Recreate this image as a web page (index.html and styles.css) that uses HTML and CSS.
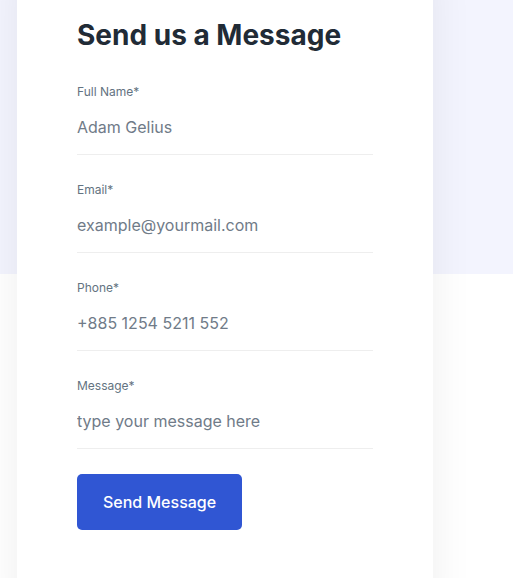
FILE: index.html
```html
<!DOCTYPE html>
<html lang="en">
<head>
<meta charset="utf-8">
<title>Contact</title>
<link rel="stylesheet" href="styles.css">
</head>
<body>
<section class="contact">
  <div class="card">
    <h3 class="title">Send us a Message</h3>
    <form class="form">
      <div class="group">
        <label class="label" for="name">Full Name*</label>
        <input class="field" id="name" type="text" placeholder="Adam Gelius">
      </div>
      <div class="group">
        <label class="label" for="email">Email*</label>
        <input class="field" id="email" type="email" placeholder="example@yourmail.com">
      </div>
      <div class="group">
        <label class="label" for="phone">Phone*</label>
        <input class="field" id="phone" type="text" placeholder="+885 1254 5211 552">
      </div>
      <div class="group group-last">
        <label class="label" for="msg">Message*</label>
        <input class="field" id="msg" type="text" placeholder="type your message here">
      </div>
      <button class="btn" type="button">Send Message</button>
    </form>
  </div>
</section>
</body>
</html>
```
FILE: styles.css
```css
* { box-sizing: border-box; }
html, body { margin: 0; padding: 0; }
body {
  font-family: Inter, "Noto Sans", sans-serif;
  background: linear-gradient(#f3f4fe 0, #f3f4fe 274px, #ffffff 274px);
  height: 578px;
  overflow: hidden;
}
.contact {
  padding-left: 17px;
}
.card {
  width: 416px;
  margin-top: -40px;
  padding: 55px 60px 80px;
  background: #fff;
  box-shadow: 0 10px 40px rgba(0, 0, 0, 0.07);
}
.title {
  margin: 0 0 28px;
  font-size: 28px;
  line-height: 40px;
  font-weight: 700;
  color: #212b36;
}
.form { display: flex; flex-direction: column; align-items: flex-start; }
.group { width: 100%; margin-bottom: 26px; }
.group-last { margin-bottom: 25px; }
.label {
  display: block;
  font-size: 12px;
  line-height: 18px;
  color: #637381;
}
.field {
  display: block;
  width: 100%;
  border: 0;
  border-bottom: 1px solid #eeeeee;
  padding: 14px 0 15px;
  font-family: inherit;
  font-size: 16px;
  line-height: 24px;
  color: #637381;
  background: transparent;
  outline: none;
}
.field::placeholder { color: #707b88; opacity: 1; }
.btn {
  border: 0;
  border-radius: 5px;
  background: #3056d3;
  color: #fff;
  font-family: inherit;
  font-size: 16px;
  font-weight: 500;
  line-height: 24px;
  padding: 16px 26px;
  cursor: pointer;
}
```
